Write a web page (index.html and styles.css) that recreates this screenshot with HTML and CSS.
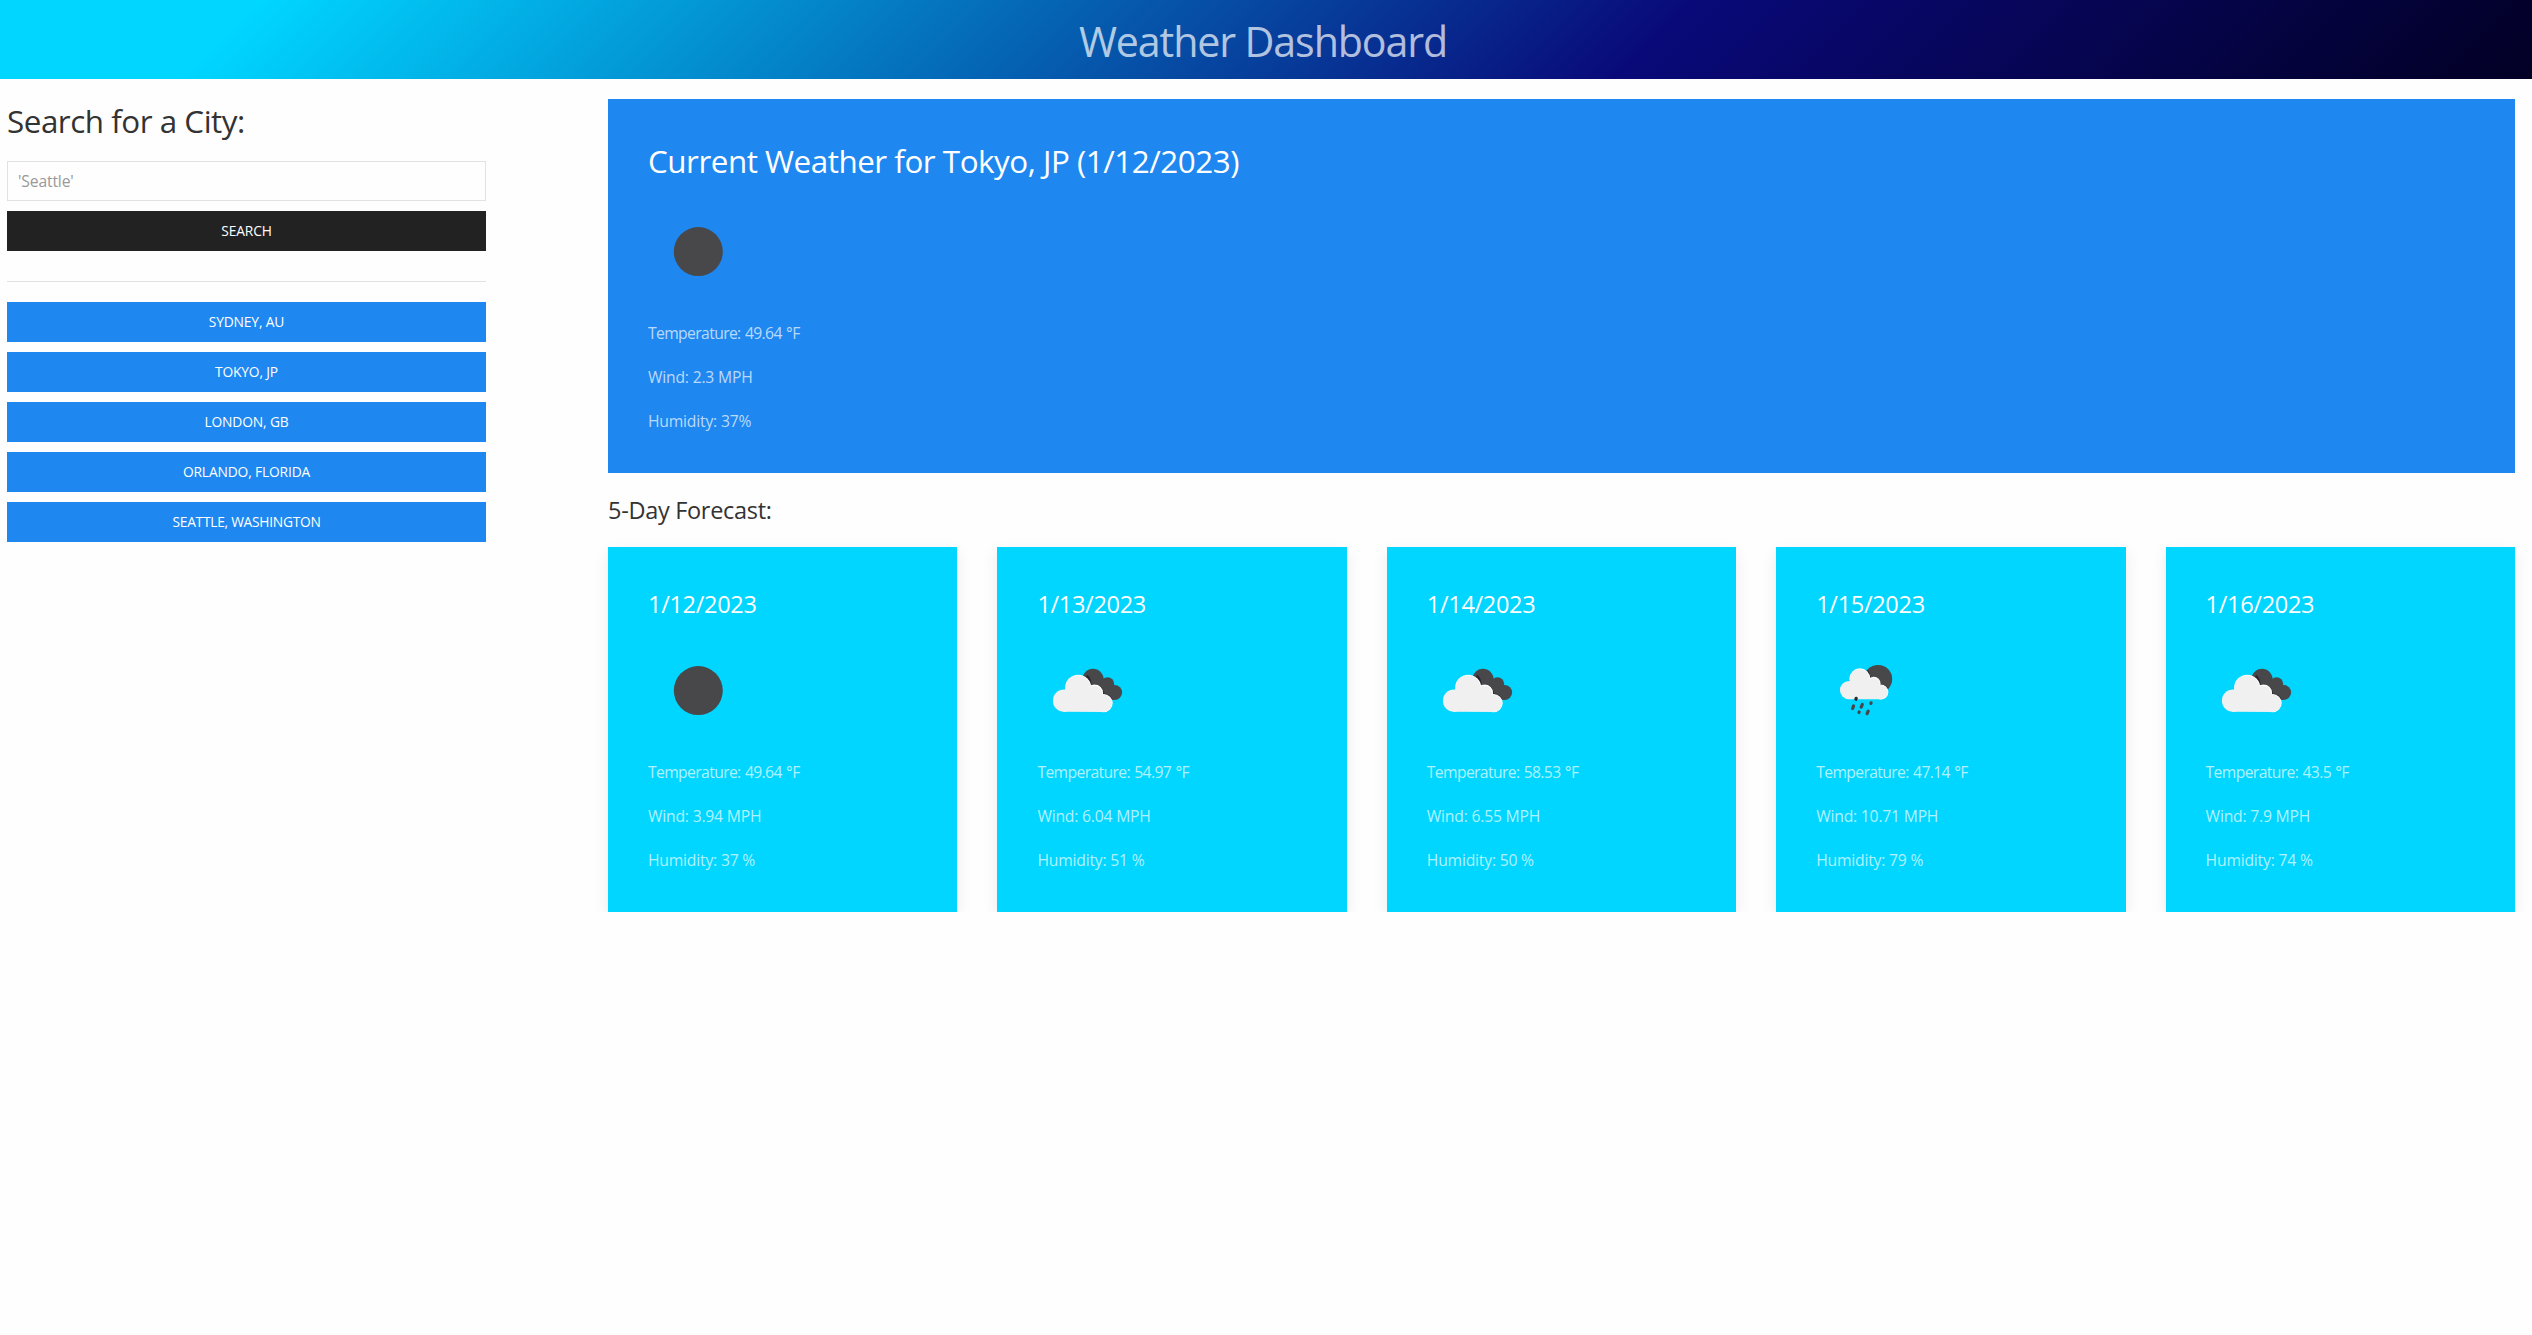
FILE: index.html
```html
<!DOCTYPE html>
<html lang="en">
<head>
<meta charset="utf-8">
<title>Weather Dashboard</title>
<link rel="stylesheet" href="styles.css">
</head>
<body>
<svg class="symbols" aria-hidden="true">
  <symbol id="clear-night" viewBox="0 0 100 100">
    <circle cx="50.3" cy="50.6" r="24.5" fill="#48484a"/>
  </symbol>
  <symbol id="broken-clouds" viewBox="0 -0.8 100 100">
    <g fill="#48484a">
      <circle cx="56" cy="38.7" r="10.7"/>
      <circle cx="70.5" cy="43.1" r="6.7"/>
      <circle cx="77.7" cy="51.7" r="7.4"/>
      <path d="M56 49 66 38 78 46V59H70Z"/>
    </g>
    <g fill="#2c2230">
      <path d="M50.5 34A13.8 13.8 0 0 1 54.6 44.4 8.9 8.9 0 0 1 66.8 52.8 10 10 0 0 1 75.6 59L60 64 44 44Z"/>
    </g>
    <g fill="#fff">
      <circle cx="41.2" cy="46.9" r="13"/>
      <circle cx="57.7" cy="52.2" r="8.4"/>
      <circle cx="66.6" cy="62.3" r="9.1"/>
    </g>
    <g fill="#f0f0f0">
      <circle cx="27.1" cy="59.9" r="11.2"/>
      <circle cx="40.9" cy="47.1" r="12.5"/>
      <circle cx="57.4" cy="52.7" r="7.7"/>
      <circle cx="66.4" cy="62.5" r="8.7"/>
      <path d="M27 71V56L42 44 58 50 67 60V71.1Z"/>
    </g>
  </symbol>
  <symbol id="rain-night" viewBox="0 -0.8 100 100">
    <circle cx="62" cy="38.3" r="14.2" fill="#48484a"/>
    <path d="M51.3 29A11.4 11.4 0 0 1 54.5 37 7.4 7.4 0 0 1 65 43.4 8.2 8.2 0 0 1 72.4 48L60 52 46 38Z" fill="#2c2230"/>
    <g fill="#fff">
      <circle cx="43.9" cy="38" r="10.5"/>
      <circle cx="57.8" cy="42.8" r="6.8"/>
      <circle cx="64.9" cy="51.2" r="7.5"/>
    </g>
    <g fill="#f0f0f0">
      <circle cx="33" cy="49.3" r="9.1"/>
      <circle cx="43.7" cy="38.2" r="10"/>
      <circle cx="57.5" cy="43.2" r="6.2"/>
      <circle cx="64.7" cy="51.3" r="7.1"/>
      <path d="M33 58.4V46L44 36 58 42 65 50V58.4Z"/>
    </g>
    <g stroke="#48484a" stroke-width="3.2" stroke-linecap="round">
      <path d="M40.2 57.5 39.9 58.5" stroke="#2c2a2c"/>
      <path d="M37.6 65.1 36.6 67.7M46.3 63.7 45.2 66.4M55.1 62 54.9 62.6M43.2 71.1 43 71.7M52.2 70.3 51.1 72.9"/>
    </g>
  </symbol>
</svg>

<header class="header"><h1>Weather Dashboard</h1></header>

<div class="layout">
  <aside class="sidebar">
    <h2>Search for a City:</h2>
    <input class="input" type="text" placeholder="'Seattle'">
    <button class="button button-search">Search</button>
    <hr>
    <div class="history">
      <button class="button">Sydney, AU</button>
      <button class="button">Tokyo, JP</button>
      <button class="button">London, GB</button>
      <button class="button">Orlando, Florida</button>
      <button class="button long">Seattle, Washington</button>
    </div>
  </aside>

  <main class="main">
    <section class="current">
      <h2>Current Weather for Tokyo, JP (1/12/2023)</h2>
      <svg class="icon"><use href="#clear-night"/></svg>
      <p class="temp">Temperature: 49.64 °F</p>
      <p>Wind: 2.3 MPH</p>
      <p>Humidity: 37%</p>
    </section>
    <h3>5-Day Forecast:</h3>
    <div class="forecast">
      <article class="day">
        <h3>1/12/2023</h3>
        <svg class="icon"><use href="#clear-night"/></svg>
        <p class="temp">Temperature: 49.64 °F</p>
        <p>Wind: 3.94 MPH</p>
        <p>Humidity: 37 %</p>
      </article>
      <article class="day">
        <h3>1/13/2023</h3>
        <svg class="icon"><use href="#broken-clouds"/></svg>
        <p class="temp">Temperature: 54.97 °F</p>
        <p>Wind: 6.04 MPH</p>
        <p>Humidity: 51 %</p>
      </article>
      <article class="day">
        <h3>1/14/2023</h3>
        <svg class="icon"><use href="#broken-clouds"/></svg>
        <p class="temp">Temperature: 58.53 °F</p>
        <p>Wind: 6.55 MPH</p>
        <p>Humidity: 50 %</p>
      </article>
      <article class="day">
        <h3>1/15/2023</h3>
        <svg class="icon"><use href="#rain-night"/></svg>
        <p class="temp">Temperature: 47.14 °F</p>
        <p>Wind: 10.71 MPH</p>
        <p>Humidity: 79 %</p>
      </article>
      <article class="day">
        <h3>1/16/2023</h3>
        <svg class="icon"><use href="#broken-clouds"/></svg>
        <p class="temp">Temperature: 43.5 °F</p>
        <p>Wind: 7.9 MPH</p>
        <p>Humidity: 74 %</p>
      </article>
    </div>
  </main>
</div>
</body>
</html>
```

FILE: styles.css
```css
* { box-sizing: border-box; }

body {
  margin: 0;
  background: #fefefe;
  color: #333;
  font: 15.7px/24px "Open Sans", "Noto Sans", sans-serif;
}

h1, h2, h3, p { margin: 0; font-weight: 400; }

.symbols { display: none; }

.header {
  display: flex;
  align-items: center;
  justify-content: center;
  height: 79px;
  padding: 2px 6px 0 0;
  background: linear-gradient(315deg, #020024 0%, #090979 35%, #00d6ff 90%);
}

h1 {
  color: rgba(255, 255, 255, .7);
  font-size: 41.2px;
  line-height: 50px;
  letter-spacing: -1.12px;
}

h2 {
  margin-bottom: 20px;
  padding-top: 2px;
  font-size: 31.4px;
  line-height: 40px;
  letter-spacing: -.48px;
}

h3 {
  padding-top: 2px;
  font-size: 23.5px;
  line-height: 31.6px;
  letter-spacing: -.3px;
}

.layout {
  display: flex;
  justify-content: space-between;
  padding: 20px 17px 0 7px;
}

.sidebar { width: 479px; }

.input {
  display: block;
  width: 100%;
  height: 40px;
  padding: 0 10px;
  border: 1px solid #e2e2e2;
  background: #fefefe;
  font: inherit;
  letter-spacing: -.15px;
}

.input::placeholder { color: #999; opacity: 1; }

.button {
  display: block;
  width: 100%;
  height: 40px;
  padding: 0;
  border: 0;
  background: #1e87f0;
  color: #fff;
  font: 13.8px/38px "Open Sans", "Noto Sans", sans-serif;
  letter-spacing: -.15px;
  text-transform: uppercase;
}

.button.long { letter-spacing: -.28px; }

.button-search { margin-top: 10px; background: #222; }

hr {
  margin: 30px 0 20px;
  border: 0;
  border-top: 1px solid #e2e2e2;
}

.history { display: grid; gap: 10px; }

.main { width: 1907px; }

.current {
  height: 374px;
  margin-bottom: 20px;
  padding: 40px;
  background: #1e87f0;
}

.current, .day { color: rgba(255, 255, 255, .7); }

.current h2, .day h3 { color: #fff; }

.icon {
  display: block;
  width: 100px;
  height: 100px;
}

.current p, .day p {
  margin-top: 20px;
  letter-spacing: -.2px;
}

.current .temp, .day .temp { letter-spacing: -.62px; word-spacing: .8px; }

.forecast {
  display: grid;
  grid-template-columns: repeat(5, 1fr);
  gap: 40px;
  margin-top: 20px;
}

.day {
  height: 365px;
  padding: 40px;
  background: #00d6ff;
  box-shadow: 0 5px 15px rgba(0, 0, 0, .08);
}

.day h3 { margin-bottom: 20px; }
```
